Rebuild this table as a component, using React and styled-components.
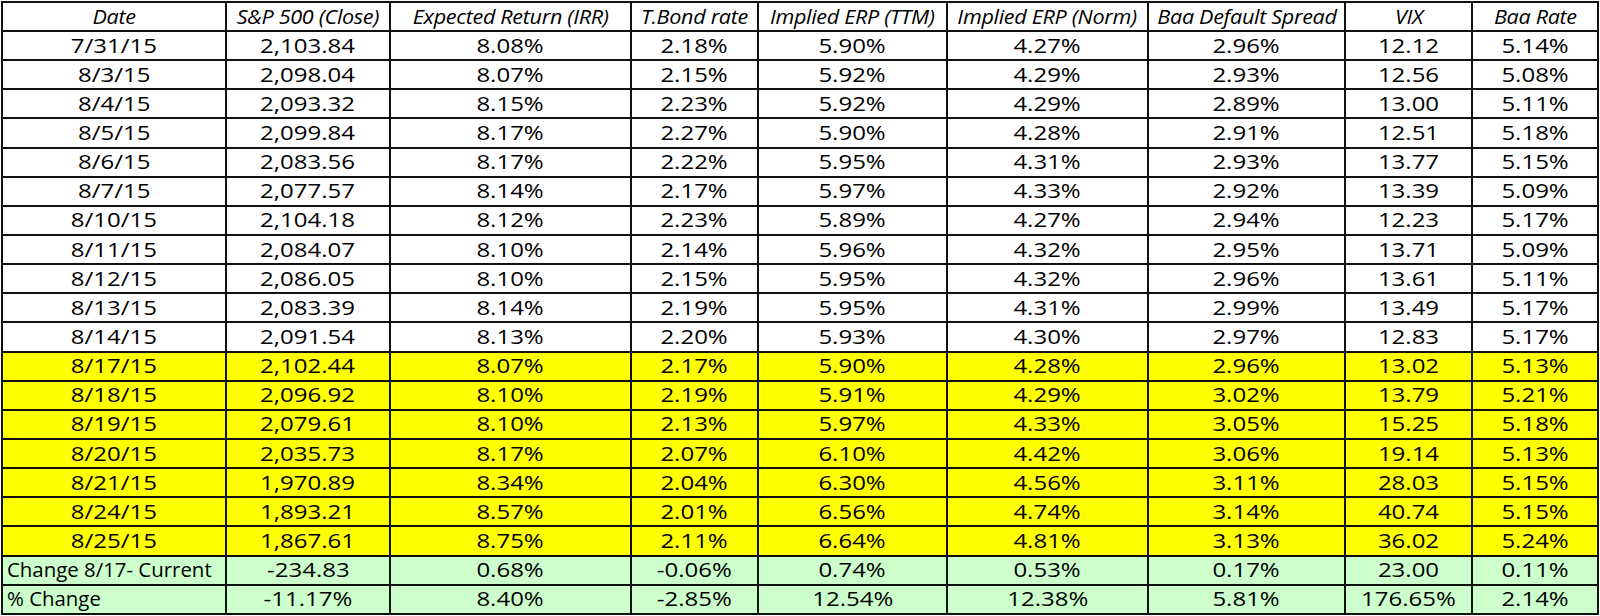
import React from 'react';
import styled, { createGlobalStyle } from 'styled-components';

const GlobalStyle = createGlobalStyle`
  html, body {
    margin: 0;
    padding: 0;
    background: #ffffff;
  }
  body {
    font-family: "Open Sans", Lato, "Liberation Sans", sans-serif;
    color: #000000;
  }
`;

const Wrapper = styled.div`
  width: 1600px;
  height: 616px;
  padding: 1px 1px 0 1px;
  box-sizing: border-box;
`;

const Table = styled.table`
  width: 1597px;
  height: 614px;
  border-collapse: collapse;
  table-layout: fixed;
  font-size: 20px;
`;

const HeadCell = styled.th`
  border: 2px solid #111;
  font-weight: 400;
  font-style: italic;
  text-align: center;
  padding: 0;
  white-space: nowrap;
  overflow: hidden;
  letter-spacing: -0.3px;
  line-height: 1;
`;

const rowColors = {
  plain: '#ffffff',
  week: '#ffff00',
  change: '#ccffcc',
};

const Row = styled.tr`
  height: 29px;
  background: ${({ $tone }) => rowColors[$tone]};
`;

const Cell = styled.td`
  border: 2px solid #111;
  padding: 0 ${({ $left }) => ($left ? '4px' : '0')};
  text-align: ${({ $left }) => ($left ? 'left' : 'center')};
  white-space: nowrap;
  overflow: hidden;
  line-height: 1;
`;

const Text = styled.span`
  display: inline-block;
  transform: scaleX(${({ $stretch }) => $stretch});
  transform-origin: ${({ $left }) => ($left ? 'left center' : 'center')};
`;

const widths = [224, 164, 241, 127, 189, 201, 197, 127, 126];

const headers = [
  'Date',
  'S&P 500 (Close)',
  'Expected Return (IRR)',
  'T.Bond rate',
  'Implied ERP (TTM)',
  'Implied ERP (Norm)',
  'Baa Default Spread',
  'VIX',
  'Baa Rate',
];

const rows = [
  ['7/31/15', '2,103.84', '8.08%', '2.18%', '5.90%', '4.27%', '2.96%', '12.12', '5.14%'],
  ['8/3/15', '2,098.04', '8.07%', '2.15%', '5.92%', '4.29%', '2.93%', '12.56', '5.08%'],
  ['8/4/15', '2,093.32', '8.15%', '2.23%', '5.92%', '4.29%', '2.89%', '13.00', '5.11%'],
  ['8/5/15', '2,099.84', '8.17%', '2.27%', '5.90%', '4.28%', '2.91%', '12.51', '5.18%'],
  ['8/6/15', '2,083.56', '8.17%', '2.22%', '5.95%', '4.31%', '2.93%', '13.77', '5.15%'],
  ['8/7/15', '2,077.57', '8.14%', '2.17%', '5.97%', '4.33%', '2.92%', '13.39', '5.09%'],
  ['8/10/15', '2,104.18', '8.12%', '2.23%', '5.89%', '4.27%', '2.94%', '12.23', '5.17%'],
  ['8/11/15', '2,084.07', '8.10%', '2.14%', '5.96%', '4.32%', '2.95%', '13.71', '5.09%'],
  ['8/12/15', '2,086.05', '8.10%', '2.15%', '5.95%', '4.32%', '2.96%', '13.61', '5.11%'],
  ['8/13/15', '2,083.39', '8.14%', '2.19%', '5.95%', '4.31%', '2.99%', '13.49', '5.17%'],
  ['8/14/15', '2,091.54', '8.13%', '2.20%', '5.93%', '4.30%', '2.97%', '12.83', '5.17%'],
  ['8/17/15', '2,102.44', '8.07%', '2.17%', '5.90%', '4.28%', '2.96%', '13.02', '5.13%'],
  ['8/18/15', '2,096.92', '8.10%', '2.19%', '5.91%', '4.29%', '3.02%', '13.79', '5.21%'],
  ['8/19/15', '2,079.61', '8.10%', '2.13%', '5.97%', '4.33%', '3.05%', '15.25', '5.18%'],
  ['8/20/15', '2,035.73', '8.17%', '2.07%', '6.10%', '4.42%', '3.06%', '19.14', '5.13%'],
  ['8/21/15', '1,970.89', '8.34%', '2.04%', '6.30%', '4.56%', '3.11%', '28.03', '5.15%'],
  ['8/24/15', '1,893.21', '8.57%', '2.01%', '6.56%', '4.74%', '3.14%', '40.74', '5.15%'],
  ['8/25/15', '1,867.61', '8.75%', '2.11%', '6.64%', '4.81%', '3.13%', '36.02', '5.24%'],
];

const changes = [
  ['Change 8/17- Current', '-234.83', '0.68%', '-0.06%', '0.74%', '0.53%', '0.17%', '23.00', '0.11%'],
  ['% Change', '-11.17%', '8.40%', '-2.85%', '12.54%', '12.38%', '5.81%', '176.65%', '2.14%'],
];

const toneFor = (date) => {
  const [, day] = date.split('/').map(Number);
  return date.startsWith('8/') && day >= 17 ? 'week' : 'plain';
};

const App = () => (
  <Wrapper>
    <GlobalStyle />
    <Table>
      <colgroup>
        {widths.map((w, i) => (
          <col key={i} style={{ width: w }} />
        ))}
      </colgroup>
      <thead>
        <Row $tone="plain">
          {headers.map((h) => (
            <HeadCell key={h}>
              <Text $stretch={1.08}>{h}</Text>
            </HeadCell>
          ))}
        </Row>
      </thead>
      <tbody>
        {rows.map((r) => (
          <Row key={r[0]} $tone={toneFor(r[0])}>
            {r.map((v, i) => (
              <Cell key={i}>
                <Text $stretch={1.2}>{v}</Text>
              </Cell>
            ))}
          </Row>
        ))}
        {changes.map((r) => (
          <Row key={r[0]} $tone="change">
            {r.map((v, i) => (
              <Cell key={i} $left={i === 0}>
                <Text $left={i === 0} $stretch={i === 0 ? 1.02 : 1.2}>
                  {v}
                </Text>
              </Cell>
            ))}
          </Row>
        ))}
      </tbody>
    </Table>
  </Wrapper>
);

export default App;
